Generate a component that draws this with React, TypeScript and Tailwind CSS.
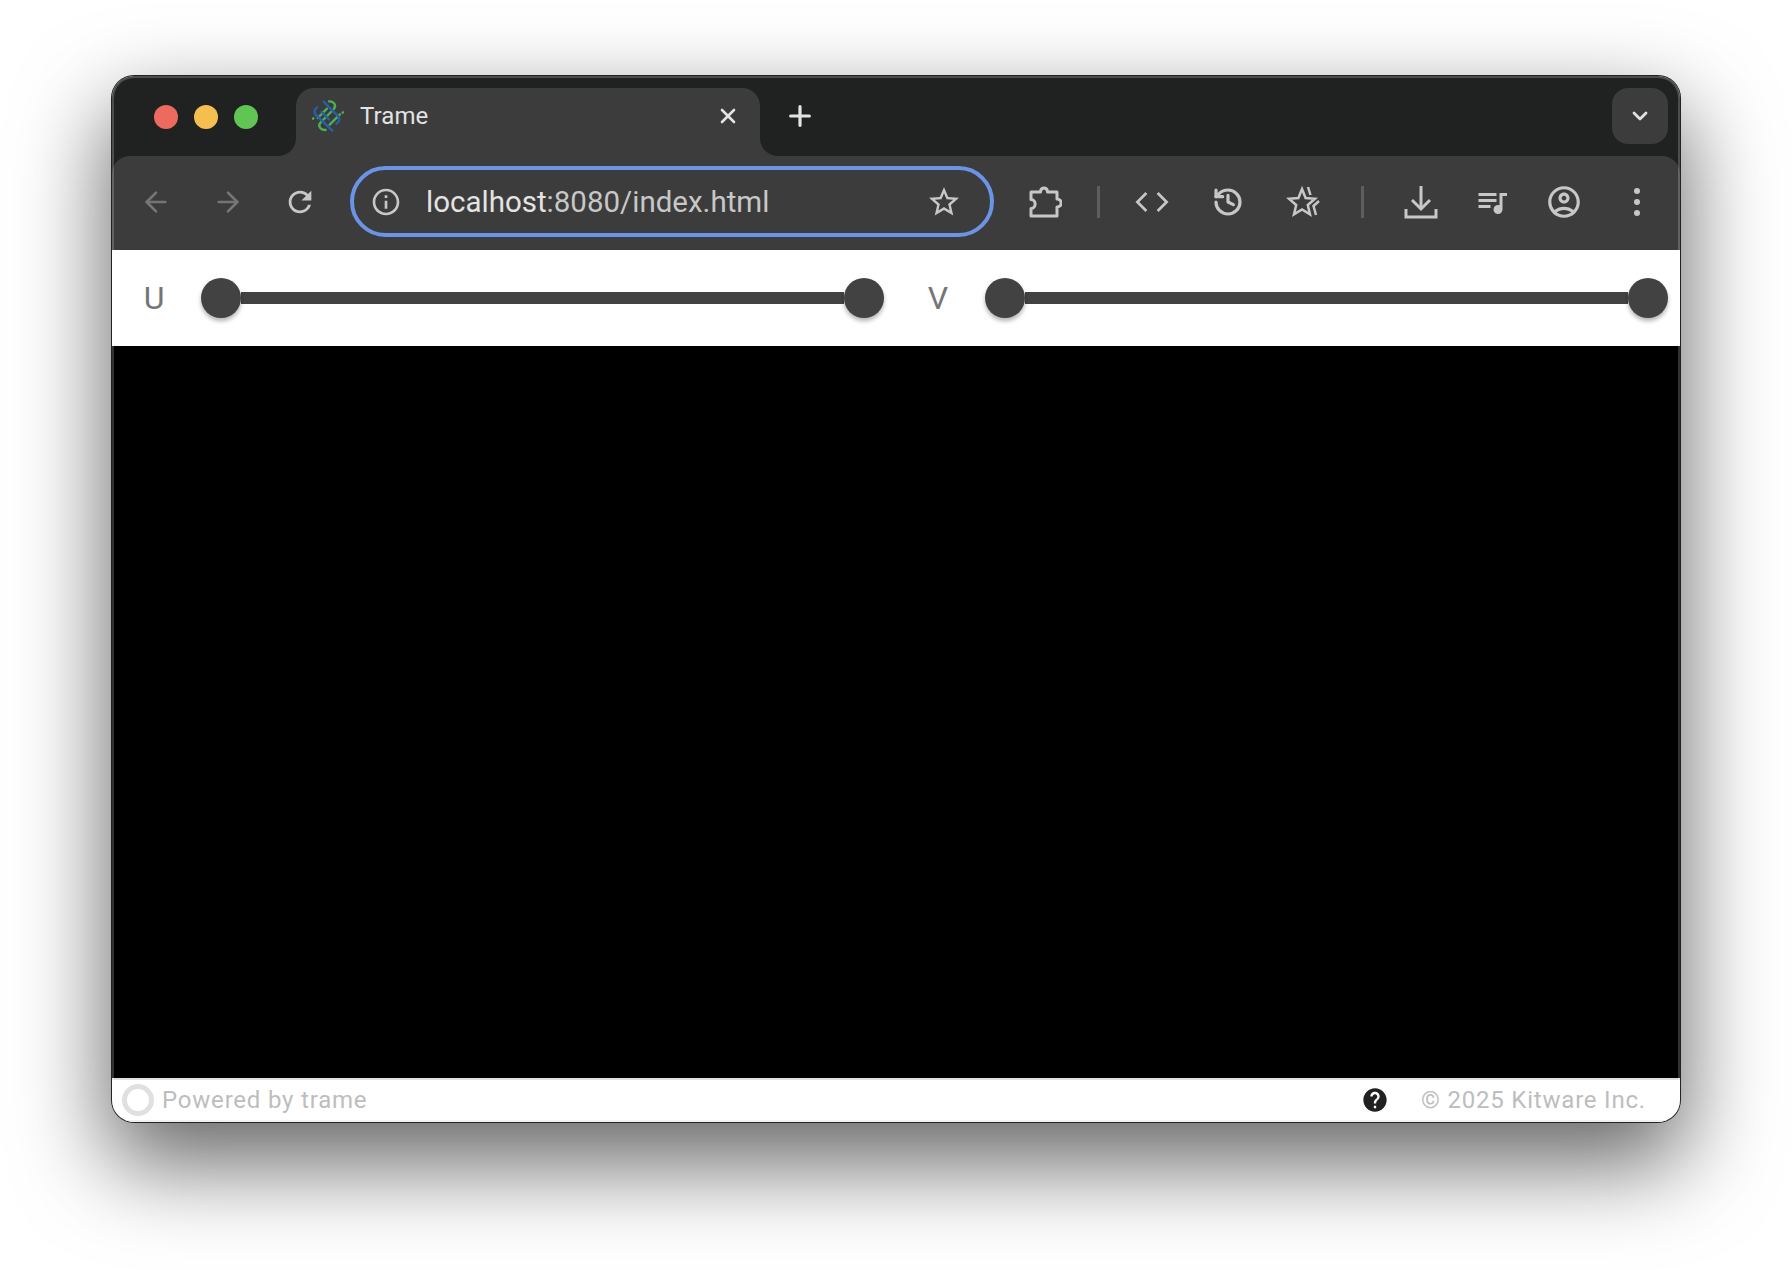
import { ArrowLeft, ArrowRight, History, Plus, X, ChevronDown } from 'lucide-react';
import {
  MdHelp,
  MdInfoOutline,
  MdOutlineAccountCircle,
  MdOutlineQueueMusic,
  MdRefresh,
  MdStarBorder,
} from 'react-icons/md';

function TrameLogo() {
  return (
    <svg viewBox="31 24 108 108" className="w-9 h-9" fill="none" strokeWidth="7" strokeLinecap="round">
      <path d="M88 34 C102 33 112 46 102 58 L62 98 C54 108 62 120 78 120" stroke="#4fb050" />
      <path d="M54 84 L82 56" stroke="#4fb050" />
      <path d="M90 104 L121 73" stroke="#4fb050" />
      <path d="M40 86 L41 85 M129 68 L130 67" stroke="#4fb050" />
      <path d="M72 35 L116 79 C123 87 118 96 110 101" stroke="#2460ad" />
      <path d="M98 122 L52 78 C42 70 42 60 52 52" stroke="#2460ad" />
      <path d="M66 66 L88 88" stroke="#2460ad" />
    </svg>
  );
}

function ExtensionIcon() {
  return (
    <svg viewBox="0 0 36 36" className="w-9 h-9" fill="none" stroke="currentColor" strokeWidth="3" strokeLinejoin="round">
      <path d="M5 8 H14.5 C14.5 2.5 21.5 2.5 21.5 8 H31 V15 C36.5 15 36.5 23 31 23 V32 H5 V24.5 C10.5 24.5 10.5 15.5 5 15.5 Z" />
    </svg>
  );
}

function CodeIcon() {
  return (
    <svg viewBox="0 0 32 32" className="w-9 h-9" fill="none" stroke="currentColor" strokeWidth="2.4">
      <path d="M11 8 L3 16 L11 24" />
      <path d="M21 8 L29 16 L21 24" />
    </svg>
  );
}

function StarsIcon() {
  return (
    <svg viewBox="0 0 36 36" className="w-9 h-9" fill="none" stroke="currentColor" strokeWidth="2.5">
      <path d="M16 5 L19.6 14 L29 14.8 L21.8 21 L24 30.4 L16 25.4 L8 30.4 L10.2 21 L3 14.8 L12.4 14 Z" />
      <path d="M22 3 L24.5 11" />
      <path d="M33 17 L27.5 22 L30 31" />
    </svg>
  );
}

function DownloadIcon() {
  return (
    <svg viewBox="0 0 36 36" className="w-9 h-9" fill="none" stroke="currentColor" strokeWidth="3">
      <path d="M18 2 V24" />
      <path d="M9 16 L18 25 L27 16" />
      <path d="M3 25 V33 H33 V25" />
    </svg>
  );
}

function DotsIcon() {
  return (
    <div className="flex flex-col gap-[5px]">
      <span className="w-[6px] h-[6px] rounded-full bg-[#c7c7c7]" />
      <span className="w-[6px] h-[6px] rounded-full bg-[#c7c7c7]" />
      <span className="w-[6px] h-[6px] rounded-full bg-[#c7c7c7]" />
    </div>
  );
}

function RangeSlider({ label }: { label: string }) {
  return (
    <div className="flex items-center w-[742px]">
      <span className="w-6 mr-[35px] text-center text-[32px] leading-none text-[#757575]">{label}</span>
      <div className="flex items-center flex-1">
        <span className="relative z-10 w-10 h-10 rounded-full bg-[#424242] shadow-[0_3px_4px_rgba(0,0,0,0.3)]" />
        <span className="flex-1 h-3 bg-[#424242]" />
        <span className="relative z-10 w-10 h-10 rounded-full bg-[#424242] shadow-[0_3px_4px_rgba(0,0,0,0.3)]" />
      </div>
    </div>
  );
}

export default function App() {
  return (
    <div className="w-full h-[1270px] bg-white overflow-hidden pt-[76px] pl-[112px] font-['Roboto',sans-serif]">
      <div className="relative w-[1568px] h-[1046px] rounded-[22px] shadow-[0_0_0_1px_#222,0_38px_90px_4px_rgba(0,0,0,0.6)]">
        <div className="flex flex-col h-full rounded-[22px] overflow-hidden bg-[#202221]">
          {/* title bar */}
          <div className="flex items-end h-20 shrink-0 pl-[184px] pr-3 relative">
            <div className="absolute left-[42px] top-[29px] flex gap-4">
              <span className="w-6 h-6 rounded-full bg-[#ec6a5e]" />
              <span className="w-6 h-6 rounded-full bg-[#f4bf4f]" />
              <span className="w-6 h-6 rounded-full bg-[#61c554]" />
            </div>
            <div className="relative flex items-center w-[464px] h-[68px] pb-[12px] pl-[14px] pr-5 bg-[#3c3c3c] rounded-t-[18px]">
              <div className="absolute -left-[18px] bottom-0 w-[18px] h-[18px] bg-[#3c3c3c]">
                <div className="w-full h-full bg-[#202221] rounded-br-[18px]" />
              </div>
              <div className="absolute -right-[18px] bottom-0 w-[18px] h-[18px] bg-[#3c3c3c]">
                <div className="w-full h-full bg-[#202221] rounded-bl-[18px]" />
              </div>
              <TrameLogo />
              <span className="ml-[14px] flex-1 text-[24px] leading-none tracking-[0.1px] text-[#e3e3e3]">Trame</span>
              <X className="w-6 h-6 text-[#e3e3e3]" strokeWidth={2.6} />
            </div>
            <div className="flex items-center justify-center w-[80px] h-[68px] pb-[12px] text-[#e3e3e3]">
              <Plus className="w-8 h-8" strokeWidth={2.4} />
            </div>
            <div className="flex-1" />
            <div className="self-start mt-3 flex items-center justify-center w-14 h-14 rounded-[16px] bg-[#3c3c3c] text-[#e3e3e3]">
              <ChevronDown className="w-6 h-6" strokeWidth={2.8} />
            </div>
          </div>

          {/* toolbar */}
          <div className="flex items-center h-[94px] shrink-0 pl-2 pb-[3px] rounded-t-[18px] bg-[#3c3c3c] text-[#c7c7c7]">
            <div className="flex items-center justify-center w-[72px] text-[#757575]">
              <ArrowLeft className="w-8 h-8" strokeWidth={2} />
            </div>
            <div className="flex items-center justify-center w-[72px] text-[#757575]">
              <ArrowRight className="w-8 h-8" strokeWidth={2} />
            </div>
            <div className="flex items-center justify-center w-[72px]">
              <MdRefresh size={34} />
            </div>
            <div className="flex items-center w-[644px] h-[71px] ml-[14px] pl-4 pr-[28px] rounded-full border-4 border-[#6b93e6]">
              <MdInfoOutline size={32} />
              <span className="ml-6 pt-[3px] flex-1 text-[29.5px] leading-none text-[#c7c7c7]">
                <span className="text-[#e3e3e3]">localhost</span>:8080/index.html
              </span>
              <MdStarBorder size={36} />
            </div>
            <div className="flex items-center justify-center w-[72px] ml-[14px]">
              <ExtensionIcon />
            </div>
            <div className="flex items-center justify-center w-9">
              <span className="w-[3px] h-8 bg-[#5e5e5e]" />
            </div>
            <div className="flex items-center justify-center w-[72px]">
              <CodeIcon />
            </div>
            <div className="flex items-center justify-center w-20">
              <History className="w-8 h-8" strokeWidth={2.4} />
            </div>
            <div className="flex items-center justify-center w-[72px]">
              <StarsIcon />
            </div>
            <div className="flex items-center justify-center w-11">
              <span className="w-[3px] h-8 bg-[#5e5e5e]" />
            </div>
            <div className="flex items-center justify-center w-[74px]">
              <DownloadIcon />
            </div>
            <div className="flex items-center justify-center w-[68px]">
              <MdOutlineQueueMusic size={36} />
            </div>
            <div className="flex items-center justify-center w-[76px]">
              <MdOutlineAccountCircle size={38} />
            </div>
            <div className="flex items-center justify-center w-[70px]">
              <DotsIcon />
            </div>
          </div>

          {/* sliders */}
          <div className="flex items-center gap-[42px] h-24 shrink-0 pl-[30px] bg-white">
            <RangeSlider label="U" />
            <RangeSlider label="V" />
          </div>

          {/* render view */}
          <div className="flex-1 bg-black" />

          {/* footer */}
          <div className="flex items-center h-11 shrink-0 pl-[10px] pr-[34px] border-t-2 border-b-2 border-t-[#e0e0e0] border-b-[#eeeeee] bg-white text-[24px] leading-none tracking-[0.8px] text-[#bdbdbd]">
            <span className="w-8 h-8 rounded-full border-[5px] border-[#e0e0e0]" />
            <span className="ml-[8px]">Powered by trame</span>
            <div className="flex-1" />
            <MdHelp size={28} className="text-[#212121]" />
            <span className="ml-[32px]">© 2025 Kitware Inc.</span>
          </div>
        </div>
        <div className="absolute inset-0 rounded-[22px] pointer-events-none shadow-[inset_0_0_0_2px_rgba(255,255,255,0.2)]" />
      </div>
    </div>
  );
}
